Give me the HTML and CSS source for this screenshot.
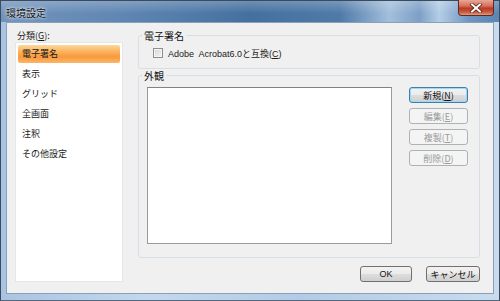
FILE: index.html
```html
<!DOCTYPE html>
<html>
<head>
    <title>環境設定</title>
    <link rel="stylesheet" href="styles.css">
</head>
<body>
    <div class="ventana">
        <div class="titulo">
            <span class="titulo-texto">環境設定</span>
            <div class="cerrar">
                <svg width="14" height="10" viewBox="0 0 14 10">
                    <path d="M3 1.5 L11 8.5 M11 1.5 L3 8.5" stroke="#4a1a14" stroke-width="3.4" stroke-linecap="square"/>
                    <path d="M3 1.5 L11 8.5 M11 1.5 L3 8.5" stroke="#ffffff" stroke-width="2" stroke-linecap="square"/>
                </svg>
            </div>
        </div>
        <div class="marco">
            <div class="cliente">
                <!-- Columna izquierda: categorias -->
                <div class="columna-izq">
                    <div class="etiqueta">分類(<u>G</u>):</div>
                    <ul class="lista">
                        <li class="item activo">電子署名</li>
                        <li class="item">表示</li>
                        <li class="item">グリッド</li>
                        <li class="item">全画面</li>
                        <li class="item">注釈</li>
                        <li class="item">その他設定</li>
                    </ul>
                </div>

                <!-- Columna derecha: opciones -->
                <div class="columna-der">
                    <fieldset class="grupo grupo-firma">
                        <legend>電子署名</legend>
                        <label class="fila-check">
                            <span class="check"></span>
                            <span>Adobe&nbsp; Acrobat6.0と互換(<u>C</u>)</span>
                        </label>
                    </fieldset>

                    <fieldset class="grupo grupo-aspecto">
                        <legend>外観</legend>
                        <div class="contenido-aspecto">
                            <div class="caja-lista"></div>
                            <div class="botones">
                                <button class="boton defecto">新規(<u>N</u>)</button>
                                <button class="boton" disabled>編集(<u>E</u>)</button>
                                <button class="boton" disabled>複製(<u>T</u>)</button>
                                <button class="boton" disabled>削除(<u>D</u>)</button>
                            </div>
                        </div>
                    </fieldset>

                    <div class="pie">
                        <button class="boton ok">OK</button>
                        <button class="boton cancelar">キャンセル</button>
                    </div>
                </div>
            </div>
        </div>
    </div>
</body>
</html>
```

FILE: styles.css
```css
        body {
            margin: 0;
            font-family: "Liberation Sans", "Noto Sans CJK JP", sans-serif;
            font-size: 9px;
            color: #1a1a1a;
        }

        .ventana {
            width: 500px;
            height: 301px;
            box-sizing: border-box;
            border: 1px solid #3a4b5e;
            border-bottom-color: #56687c;
            display: flex;
            flex-direction: column;
            background: linear-gradient(90deg, #a9c4e2, #c3d8ee 30%, #b3cbe6 60%, #c9dcef);
        }

        .titulo {
            height: 21px;
            display: flex;
            align-items: center;
            padding-left: 5px;
            background:
                linear-gradient(180deg, rgba(255,255,255,0.22), rgba(255,255,255,0) 60%),
                linear-gradient(90deg, #7294bc 0%, #5f86b2 25%, #44709f 50%, #4f7aa8 68%, #a3bfdc 78%, #7d9fc6 84%, #b4cde6 88%, #6f95c0 94%, #5c85b3 100%);
        }

        .titulo-texto {
            font-family: "Noto Sans CJK JP", sans-serif;
            font-size: 10px;
            color: #111;
            text-shadow: 0 0 4px rgba(255,255,255,0.9), 0 0 2px rgba(255,255,255,0.8);
            margin-top: 1px;
        }

        .cerrar {
            align-self: flex-start;
            margin-top: -1px;
            margin-left: auto;
            margin-right: 5px;
            width: 36px;
            height: 16px;
            box-sizing: border-box;
            border: 1px solid #5e2a22;
            border-top: none;
            border-radius: 0 0 4px 4px;
            background: linear-gradient(180deg, #e9a897 0%, #d66e58 40%, #bb3a24 55%, #c85a40 80%, #e09a7e 100%);
            display: flex;
            align-items: center;
            justify-content: center;
        }

        .marco {
            flex: 1;
            display: flex;
            padding: 0 5px 6px 5px;
        }

        .cliente {
            flex: 1;
            display: flex;
            gap: 15px;
            border: 1px solid #8aa0b8;
            background: #f0f0f0;
            padding: 6px 13px 11px 8px;
        }

        .columna-izq {
            width: 108px;
            display: flex;
            flex-direction: column;
        }

        .etiqueta {
            line-height: 13px;
            padding-left: 2px;
            font-family: "Noto Sans CJK JP", sans-serif;
        }

        ul {
            list-style: none;
            padding: 0;
            margin: 0;
        }

        .lista {
            flex: 1;
            background: #ffffff;
            border: 1px solid #e6e6e6;
            padding: 2px 2px;
        }

        .item {
            height: 18px;
            line-height: 18px;
            margin-bottom: 2px;
            padding-left: 4px;
            font-family: "Noto Sans CJK JP", sans-serif;
        }

        .activo {
            background: linear-gradient(180deg, #fdd89c 0%, #fbb460 35%, #f99a3c 65%, #fbb56a 100%);
            border-radius: 2px;
        }

        .columna-der {
            flex: 1;
            display: flex;
            flex-direction: column;
        }

        .grupo {
            margin: 0;
            min-width: 0;
            border: 1px solid #d5dfe5;
            border-radius: 3px;
            padding: 0;
        }

        .grupo legend {
            margin-left: 3px;
            padding: 0 2px;
            line-height: 13px;
            font-family: "Noto Sans CJK JP", sans-serif;
            font-size: 10px;
            color: #111;
        }

        .grupo-firma {
            padding: 5px 0 9px 0;
        }

        .fila-check {
            display: flex;
            align-items: center;
            gap: 5px;
            height: 12px;
            margin-left: 14px;
        }

        .check {
            width: 10px;
            height: 10px;
            box-sizing: border-box;
            border: 1px solid #8f8f8f;
            background: linear-gradient(135deg, #d6d6d6, #f4f4f4);
            box-shadow: inset 0 0 0 1px #f4f4f4;
        }

        .grupo-aspecto {
            flex: 1;
            padding: 5px 0 13px 0;
            display: flex;
        }

        .contenido-aspecto {
            flex: 1;
            display: flex;
            gap: 17px;
            margin: 0 11px 0 8px;
        }

        .caja-lista {
            flex: 1;
            background: #ffffff;
            border: 1px solid #9a9a9a;
            border-top-color: #828282;
        }

        .botones {
            display: flex;
            flex-direction: column;
            gap: 5px;
        }

        .boton {
            width: 59px;
            height: 16px;
            box-sizing: border-box;
            padding: 0;
            border: 1px solid #707070;
            border-radius: 3px;
            background: linear-gradient(180deg, #f2f2f2 0%, #ebebeb 48%, #dddddd 52%, #cfcfcf 100%);
            font-family: "Noto Sans CJK JP", sans-serif;
            font-size: 9px;
            line-height: 13px;
            color: #111;
        }

        .defecto {
            border-color: #3c7fb1;
            box-shadow: inset 0 0 0 1px #9fd7f5;
        }

        .boton:disabled {
            border-color: #adb2b5;
            background: #f4f4f4;
            color: #9a9a9a;
        }

        .pie {
            display: flex;
            justify-content: flex-end;
            gap: 14px;
            margin-top: 8px;
        }

        .ok {
            width: 52px;
            font-family: "Liberation Sans", sans-serif;
        }

        .cancelar {
            width: 54px;
        }
```
